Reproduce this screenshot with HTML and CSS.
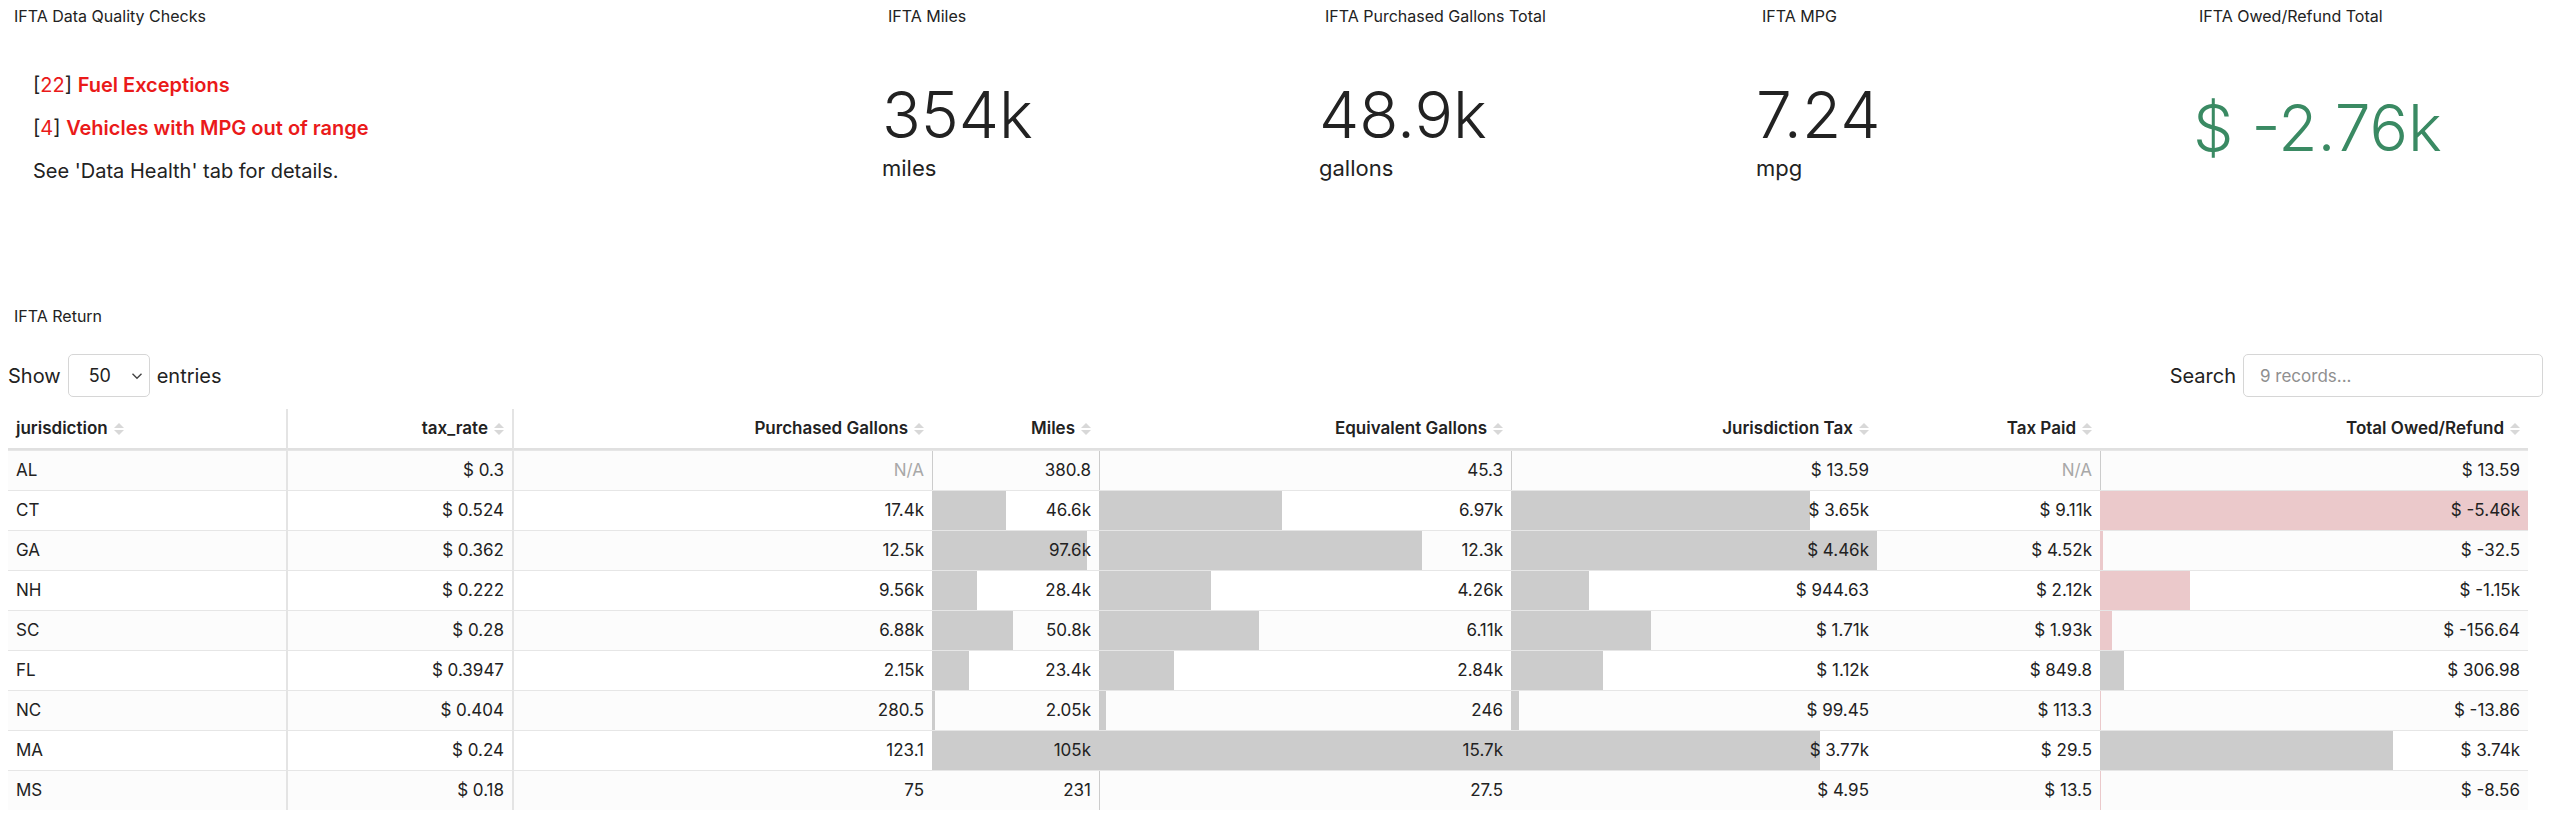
FILE: index.html
```html
<!DOCTYPE html>
<html lang="en">
<head>
<meta charset="UTF-8">
<meta name="viewport" content="width=device-width, initial-scale=1.0">
<title>IFTA Dashboard</title>
<link rel="stylesheet" href="styles.css">
</head>
<body>

<!-- top row of summary widgets -->
<div class="kpi-row">
    <div class="widget">
        <div class="widget-title">IFTA Data Quality Checks</div>
        <div class="widget-body checks">
            <div class="check">[<span class="red">22</span>] <span class="red bold">Fuel Exceptions</span></div>
            <div class="check">[<span class="red">4</span>] <span class="red bold">Vehicles with MPG out of range</span></div>
            <div class="check">See 'Data Health' tab for details.</div>
        </div>
    </div>
    <div class="widget">
        <div class="widget-title">IFTA Miles</div>
        <div class="widget-body kpi">
            <div class="kpi-value">354k</div>
            <div class="kpi-unit">miles</div>
        </div>
    </div>
    <div class="widget">
        <div class="widget-title">IFTA Purchased Gallons Total</div>
        <div class="widget-body kpi">
            <div class="kpi-value">48.9k</div>
            <div class="kpi-unit">gallons</div>
        </div>
    </div>
    <div class="widget">
        <div class="widget-title">IFTA MPG</div>
        <div class="widget-body kpi">
            <div class="kpi-value">7.24</div>
            <div class="kpi-unit">mpg</div>
        </div>
    </div>
    <div class="widget">
        <div class="widget-title">IFTA Owed/Refund Total</div>
        <div class="widget-body kpi kpi-money">
            <div class="kpi-value">$ -2.76k</div>
        </div>
    </div>
</div>

<!-- return table -->
<div class="section">
    <div class="section-title">IFTA Return</div>
    <div class="dt-controls">
        <label class="dt-length">Show
            <span class="select-wrap">
                <select><option>50</option></select>
                <svg class="chevron" width="12" height="8" viewBox="0 0 12 8"><path d="M1.5 1.8 L6 6.2 L10.5 1.8" fill="none" stroke="#444" stroke-width="1.4"/></svg>
            </span>
            entries</label>
        <label class="dt-search">Search <input type="search" placeholder="9 records..."></label>
    </div>

    <table class="dt">
        <colgroup>
            <col style="width:280px">
            <col style="width:226px">
            <col style="width:418px">
            <col style="width:167px">
            <col style="width:412px">
            <col style="width:366px">
            <col style="width:223px">
            <col style="width:428px">
        </colgroup>
        <thead>
            <tr>
                <th class="left fixed">jurisdiction<span class="sort"></span></th>
                <th class="fixed">tax_rate<span class="sort"></span></th>
                <th>Purchased Gallons<span class="sort"></span></th>
                <th>Miles<span class="sort"></span></th>
                <th>Equivalent Gallons<span class="sort"></span></th>
                <th>Jurisdiction Tax<span class="sort"></span></th>
                <th>Tax Paid<span class="sort"></span></th>
                <th>Total Owed/Refund<span class="sort"></span></th>
            </tr>
        </thead>
        <tbody>
            <tr>
                <td class="left fixed">AL</td>
                <td class="fixed">$ 0.3</td>
                <td class="na">N/A</td>
                <td class="bar" style="--w:0.4%">380.8</td>
                <td class="bar" style="--w:0.3%">45.3</td>
                <td class="bar" style="--w:0.3%">$ 13.59</td>
                <td class="na">N/A</td>
                <td class="bar" style="--w:0.25%">$ 13.59</td>
            </tr>
            <tr>
                <td class="left fixed">CT</td>
                <td class="fixed">$ 0.524</td>
                <td>17.4k</td>
                <td class="bar" style="--w:44.4%">46.6k</td>
                <td class="bar" style="--w:44.4%">6.97k</td>
                <td class="bar" style="--w:81.8%">$ 3.65k</td>
                <td>$ 9.11k</td>
                <td class="bar neg" style="--w:100%">$ -5.46k</td>
            </tr>
            <tr>
                <td class="left fixed">GA</td>
                <td class="fixed">$ 0.362</td>
                <td>12.5k</td>
                <td class="bar" style="--w:93%">97.6k</td>
                <td class="bar" style="--w:78.3%">12.3k</td>
                <td class="bar" style="--w:100%">$ 4.46k</td>
                <td>$ 4.52k</td>
                <td class="bar neg" style="--w:0.6%">$ -32.5</td>
            </tr>
            <tr>
                <td class="left fixed">NH</td>
                <td class="fixed">$ 0.222</td>
                <td>9.56k</td>
                <td class="bar" style="--w:27%">28.4k</td>
                <td class="bar" style="--w:27.1%">4.26k</td>
                <td class="bar" style="--w:21.2%">$ 944.63</td>
                <td>$ 2.12k</td>
                <td class="bar neg" style="--w:21%">$ -1.15k</td>
            </tr>
            <tr>
                <td class="left fixed">SC</td>
                <td class="fixed">$ 0.28</td>
                <td>6.88k</td>
                <td class="bar" style="--w:48.4%">50.8k</td>
                <td class="bar" style="--w:38.9%">6.11k</td>
                <td class="bar" style="--w:38.3%">$ 1.71k</td>
                <td>$ 1.93k</td>
                <td class="bar neg" style="--w:2.9%">$ -156.64</td>
            </tr>
            <tr>
                <td class="left fixed">FL</td>
                <td class="fixed">$ 0.3947</td>
                <td>2.15k</td>
                <td class="bar" style="--w:22.3%">23.4k</td>
                <td class="bar" style="--w:18.1%">2.84k</td>
                <td class="bar" style="--w:25.1%">$ 1.12k</td>
                <td>$ 849.8</td>
                <td class="bar" style="--w:5.6%">$ 306.98</td>
            </tr>
            <tr>
                <td class="left fixed">NC</td>
                <td class="fixed">$ 0.404</td>
                <td>280.5</td>
                <td class="bar" style="--w:2%">2.05k</td>
                <td class="bar" style="--w:1.6%">246</td>
                <td class="bar" style="--w:2.2%">$ 99.45</td>
                <td>$ 113.3</td>
                <td class="bar neg" style="--w:0.25%">$ -13.86</td>
            </tr>
            <tr>
                <td class="left fixed">MA</td>
                <td class="fixed">$ 0.24</td>
                <td>123.1</td>
                <td class="bar" style="--w:100%">105k</td>
                <td class="bar" style="--w:100%">15.7k</td>
                <td class="bar" style="--w:84.5%">$ 3.77k</td>
                <td>$ 29.5</td>
                <td class="bar" style="--w:68.5%">$ 3.74k</td>
            </tr>
            <tr>
                <td class="left fixed">MS</td>
                <td class="fixed">$ 0.18</td>
                <td>75</td>
                <td class="bar" style="--w:0.2%">231</td>
                <td class="bar" style="--w:0.2%">27.5</td>
                <td class="bar" style="--w:0.1%">$ 4.95</td>
                <td>$ 13.5</td>
                <td class="bar neg" style="--w:0.16%">$ -8.56</td>
            </tr>
        </tbody>
    </table>
</div>

</body>
</html>
```

FILE: styles.css
```css
body {
    margin: 0;
    background-color: #ffffff;
    color: #222222;
    font-family: Inter, "Noto Sans", sans-serif;
}

/* summary widgets */
.kpi-row {
    display: grid;
    grid-template-columns: 874px 437px 437px 437px 1fr;
    height: 300px;
}

.widget-title {
    font-size: 16px;
    line-height: 19px;
    padding: 7px 14px 0;
}

.widget-body {
    height: 200px;
    margin-top: 2px;
    display: flex;
    flex-direction: column;
    justify-content: center;
}

.checks {
    padding-left: 33px;
    font-size: 20px;
}

.check {
    line-height: 28px;
}

.check + .check {
    margin-top: 15px;
}

.red {
    color: #ea1a1a;
}

.bold {
    font-weight: 600;
}

.kpi {
    padding-left: 8px;
    padding-top: 4px;
}

.kpi-value {
    font-size: 64px;
    line-height: 64px;
    font-weight: 300;
}

.kpi-unit {
    font-size: 22px;
    line-height: 26px;
    margin-top: 8px;
}

.kpi-money {
    padding-top: 0;
    color: #3a8a63;
}

/* return table section */
.section {
    padding: 7px 17px 0 8px;
}

.section-title {
    font-size: 16px;
    line-height: 19px;
    padding-left: 6px;
}

.dt-controls {
    display: flex;
    justify-content: space-between;
    align-items: center;
    margin-top: 28px;
    font-size: 20px;
}

.dt-length, .dt-search {
    display: flex;
    align-items: center;
    gap: 7px;
}

.select-wrap {
    position: relative;
    display: inline-block;
}

.select-wrap select {
    appearance: none;
    width: 82px;
    height: 43px;
    padding: 0 0 0 20px;
    border: 1px solid #d6d6d6;
    border-radius: 5px;
    background: #fff;
    color: #222;
    font-family: inherit;
    font-size: 18px;
}

.chevron {
    position: absolute;
    right: 7px;
    top: 18px;
}

.dt-search input {
    width: 300px;
    height: 43px;
    box-sizing: border-box;
    padding: 0 16px;
    border: 1px solid #d6d6d6;
    border-radius: 5px;
    font-family: inherit;
    font-size: 17px;
    color: #222;
}

.dt-search input::placeholder {
    color: #8f8f8f;
}

.dt {
    width: 2520px;
    table-layout: fixed;
    border-collapse: separate;
    border-spacing: 0;
    margin-top: 12px;
    font-size: 17px;
}

.dt th {
    font-weight: 600;
    text-align: right;
    white-space: nowrap;
    padding: 9px 8px;
    line-height: 21px;
    border-bottom: 2px solid #e0e0e0;
}

.dt td {
    text-align: right;
    white-space: nowrap;
    padding: 9px 8px;
    line-height: 21px;
    border-top: 1px solid #e6e6e6;
}

.dt tbody tr:nth-child(odd) td {
    background-color: #fcfcfc;
}

.dt .left {
    text-align: left;
}

.dt .fixed {
    border-right: 2px solid #e4e4e4;
}

.dt td.na {
    color: #a8a8a8;
}

.dt td.bar {
    background-image: linear-gradient(to right, #cccccc var(--w), transparent var(--w));
}

.dt td.bar.neg {
    background-image: linear-gradient(to right, #ebc9cb var(--w), transparent var(--w));
}

/* sort arrows */
.sort {
    display: inline-block;
    vertical-align: -1px;
    margin-left: 6px;
    width: 10px;
}

.sort::before, .sort::after {
    content: "";
    display: block;
    width: 0;
    height: 0;
    border-left: 5px solid transparent;
    border-right: 5px solid transparent;
}

.sort::before {
    border-bottom: 5px solid #d8d8d8;
}

.sort::after {
    margin-top: 2px;
    border-top: 5px solid #d8d8d8;
}
```
